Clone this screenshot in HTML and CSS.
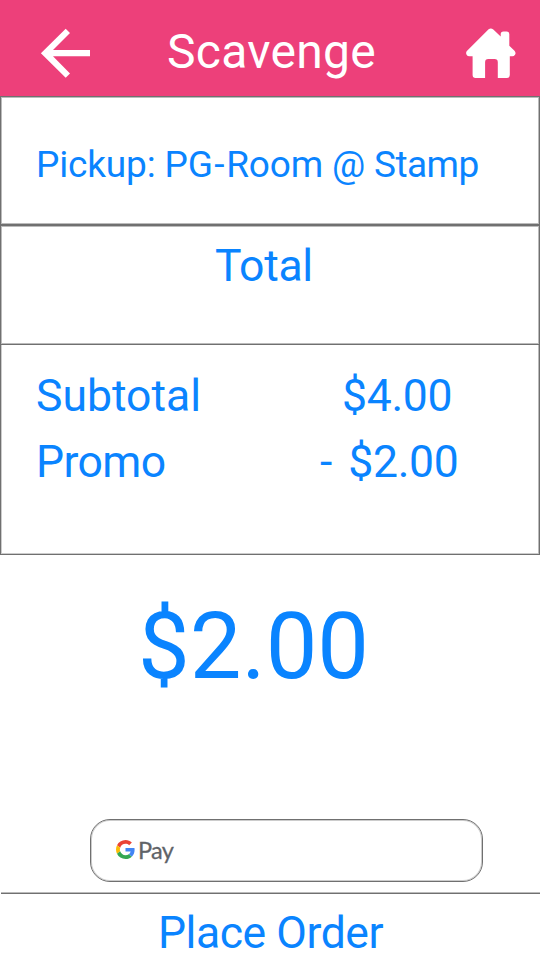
FILE: index.html
```html
<!DOCTYPE html>
<html lang="en">
<head>
<meta charset="utf-8">
<title>Scavenge</title>
<link rel="stylesheet" href="styles.css">
</head>
<body>
<header class="bar">
  <svg class="back" viewBox="0 0 50 50" aria-label="Back"><path d="M.9 25.200 25.700.7l4.300 4.300L13 22H50v6.300H13L30 45.400l-4.300 4.400z"/></svg>
  <h1 class="title">Scavenge</h1>
  <svg class="home" viewBox="0 0 50 50" aria-label="Home"><path d="M22.600 1.200q2.400-1.800 4.700.4l7.400 7V6.200q0-2.800 2.800-2.800h3q2.800 0 2.800 2.800v11.500l5.200 5.100q1.800 2.100.5 4-.9 1.500-2.600 1.500h-2.600v18.700q0 3-3 3h-9V34.300q0-3.200-3.200-3.200h-6.300q-3.200 0-3.200 3.200V50H9.600q-3 0-3-3V28.300H3.400Q1.500 28.300.6 26.700q-1.200-2 .5-3.900z"/></svg>
</header>
<main>
  <section class="box pickup"><p class="pickup-text"><span class="prefix">Pickup: </span>PG<span class="dash">-</span>Room @ <span class="place">Stamp</span></p></section>
  <section class="box total"><h2 class="label">Total</h2></section>
  <section class="box lines">
    <div class="row"><span class="name">Subtotal</span><span class="amount">$4.00</span></div>
    <div class="row"><span class="name promo">Promo</span><span class="amount discount">- $2.00</span></div>
  </section>
  <p class="grand">$2.00</p>
  <div class="pay">
    <svg class="g" viewBox="0 0 48 48" aria-hidden="true">
      <path fill="#ea4335" d="M24 9.500c3.540 0 6.710 1.220 9.210 3.600l6.850-6.850C35.900 2.380 30.470 0 24 0 14.620 0 6.510 5.380 2.560 13.220l7.980 6.190C12.430 13.720 17.740 9.500 24 9.500z"/>
      <path fill="#4285f4" d="M46.980 24.550c0-1.570-.15-3.090-.38-4.550H24v9.020h12.940c-.58 2.960-2.260 5.480-4.780 7.180l7.730 6c4.510-4.180 7.090-10.360 7.090-17.650z"/>
      <path fill="#fbbc05" d="M10.530 28.590c-.48-1.450-.76-2.990-.76-4.590s.27-3.140.76-4.590l-7.980-6.190C.92 16.460 0 20.120 0 24c0 3.880.92 7.540 2.560 10.780l7.970-6.190z"/>
      <path fill="#34a853" d="M24 48c6.480 0 11.930-2.130 15.890-5.810l-7.730-6c-2.150 1.450-4.920 2.300-8.160 2.300-6.260 0-11.570-4.220-13.470-9.910l-7.980 6.190C6.510 42.620 14.620 48 24 48z"/>
    </svg>
    <span class="pay-text">Pay</span>
  </div>
</main>
<footer class="order">Place Order</footer>
</body>
</html>
```
FILE: styles.css
```css
* { box-sizing: border-box; margin: 0; padding: 0; }
body {
  width: 540px;
  height: 960px;
  overflow: hidden;
  background: #fff;
  color: #0a84ff;
  font-family: Roboto, sans-serif;
  font-weight: 400;
}
svg { display: block; fill: #fff; }

.bar {
  display: flex;
  height: 96px;
  padding-left: 40px;
  background: #ed407a;
  color: #fff;
}
.back { width: 50px; height: 50px; margin-top: 28px; }
.title { width: 376px; padding-left: 77px; font-size: 48px; font-weight: 400; line-height: 103px; letter-spacing: .3px; }
.home { width: 50px; height: 50px; margin-top: 28px; }

.box { border: 1px solid #707070; }
.pickup { height: 129px; box-shadow: inset 0 0 0 1px #bbb; }
.pickup-text { padding: 43px 0 0 35px; font-size: 37px; line-height: 50px; }
.prefix { letter-spacing: -.15px; }
.dash { margin: 0 2px 0 1.500px; }
.pickup-text { letter-spacing: -.2px; }
.place { letter-spacing: -.5px; }
.total { height: 120px; box-shadow: inset 0 0 0 1px #bbb; }
.label { padding: 10px 0 0 214px; font-size: 44.500px; font-weight: 400; line-height: 60px; letter-spacing: -.3px; }
.lines {
  height: 210px;
  padding: 18px 0 0 35px;
  border-top: 0;
  box-shadow: inset 1px 0 #ccc, inset -1px 0 #bbb, inset 0 -1px #ccc;
}
.row { display: flex; height: 66px; font-size: 44.500px; line-height: 66px; }
.name { width: 306px; }
.promo { letter-spacing: -.6px; }
.amount { letter-spacing: -.3px; }
.row .discount { margin-left: -22px; word-spacing: 5.500px; }

.grand { padding-left: 138px; height: 264px; font-size: 92px; line-height: 183px; }
.pay {
  display: flex;
  align-items: flex-start;
  width: 393px;
  height: 63px;
  margin-left: 90px;
  padding: 20px 0 0 25px;
  border: 1px solid #707070;
  border-radius: 20px;
  box-shadow: inset 0 0 0 1px #ccc;
}
.g { width: 19px; height: 19px; }
.pay-text {
  margin: -1px 0 0 3px;
  color: #5f6368;
  font-family: Lato, sans-serif;
  font-size: 23.500px;
  line-height: 22px;
  letter-spacing: -.7px;
  -webkit-text-stroke: .3px #5f6368;
}
.order {
  width: 539px;
  height: 68px;
  margin: 10px 0 0 1px;
  padding-left: 157px;
  border-top: 1px solid #bbb;
  box-shadow: inset 0 1px #707070;
  font-size: 44.500px;
  line-height: 80px;
  letter-spacing: -.45px;
}
```
